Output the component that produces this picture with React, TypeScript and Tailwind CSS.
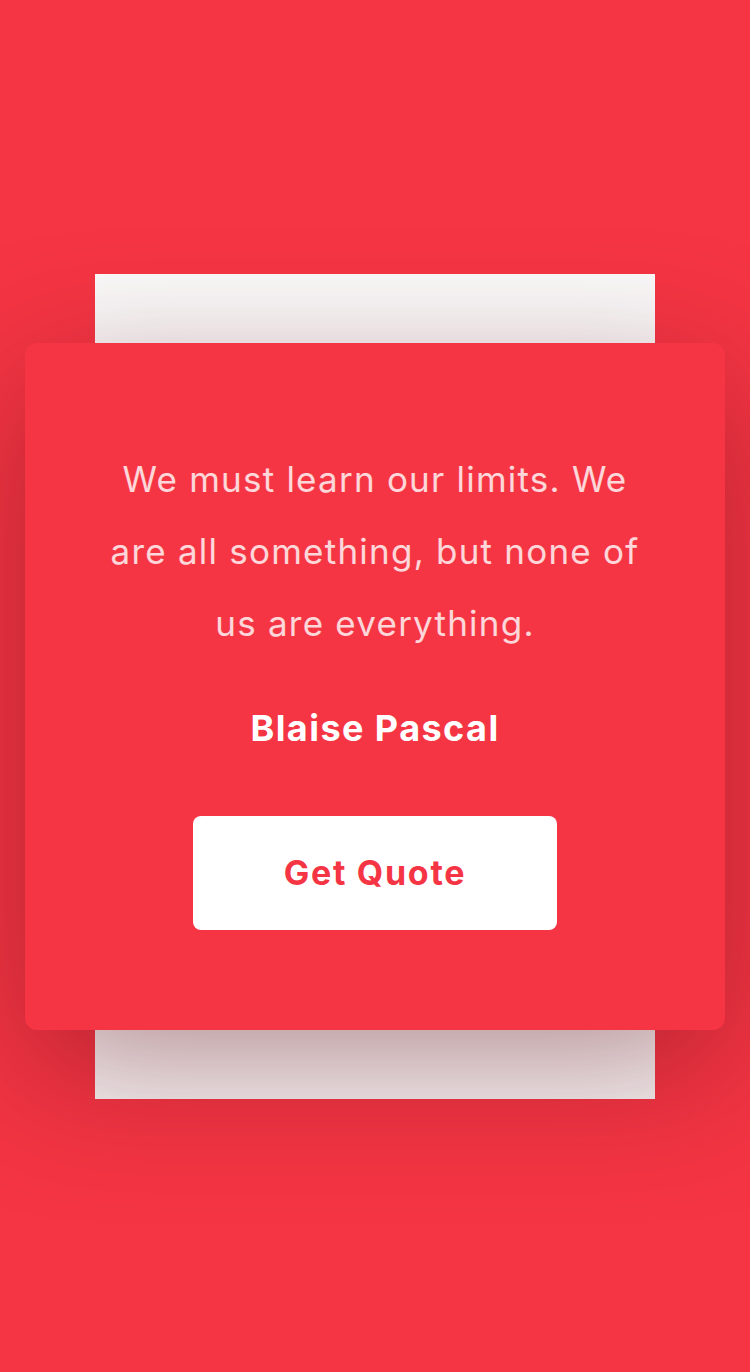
export default function App() {
  return (
    <div className="flex min-h-screen items-center justify-center bg-[#f53544] font-['Inter','Liberation_Sans',sans-serif]">
      <div className="grid place-items-center">
        <div className="h-[825px] w-[560px] bg-[#fafafa] [grid-area:1/1]"></div>
        <div className="w-[700px] rounded-xl bg-[#f53544] px-[70px] py-[100px] text-center shadow-[0_40px_140px_rgba(100,15,25,0.45)] [grid-area:1/1]">
          <p className="text-[35px] leading-[72px] tracking-[0.035em] text-white/80">
            We must learn our limits. We are all something, but none of us
            are everything.
          </p>
          <h3 className="mt-[42px] text-[36px] leading-[54px] font-bold tracking-[0.04em] text-white">
            Blaise Pascal
          </h3>
          <a
            href="#"
            className="mx-auto mt-[61px] flex h-[114px] w-[364px] items-center justify-center rounded-lg bg-white text-[34px] font-bold tracking-[0.05em] text-[#f53544]"
          >
            Get Quote
          </a>
        </div>
      </div>
    </div>
  );
}
